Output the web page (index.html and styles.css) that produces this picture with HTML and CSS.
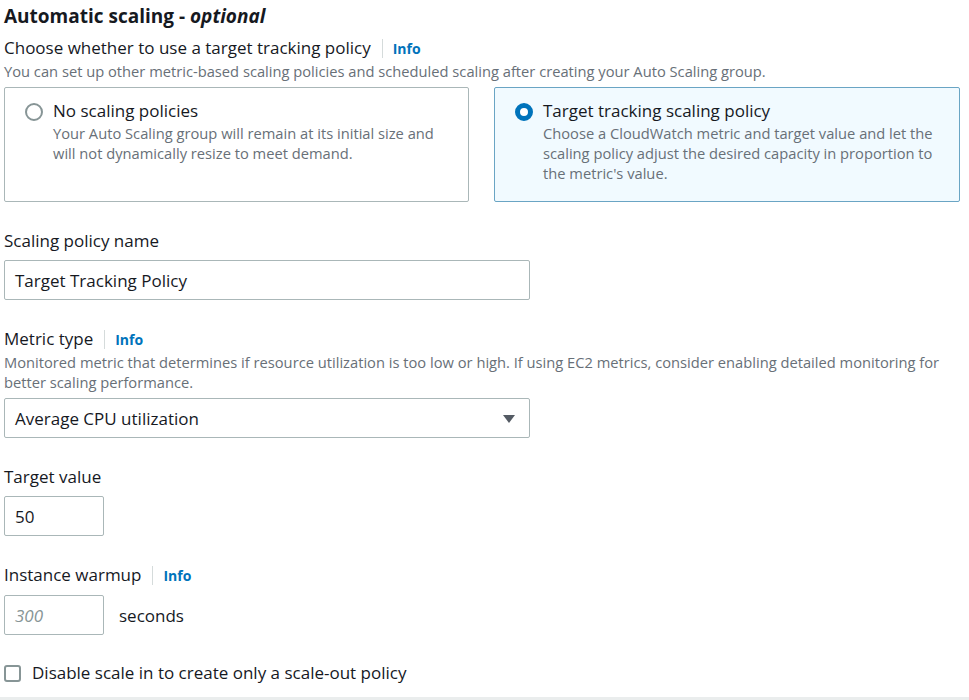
FILE: index.html
```html
<!DOCTYPE html>
<html>
<head>
<meta charset="utf-8">
<link rel="stylesheet" href="styles.css">
</head>
<body>
<div class="page">
  <h2 class="title">Automatic scaling - <i>optional</i></h2>

  <div class="field first">
    <div class="label-row"><span class="label">Choose whether to use a target tracking policy</span><span class="sep"></span><a class="info">Info</a></div>
    <div class="desc">You can set up other metric-based scaling policies and scheduled scaling after creating your Auto Scaling group.</div>
    <div class="tiles">
      <div class="tile">
        <span class="radio"></span>
        <div class="tile-text">
          <div class="tile-title">No scaling policies</div>
          <div class="tile-desc">Your Auto Scaling group will remain at its initial size and will not dynamically resize to meet demand.</div>
        </div>
      </div>
      <div class="tile selected">
        <span class="radio checked"></span>
        <div class="tile-text">
          <div class="tile-title">Target tracking scaling policy</div>
          <div class="tile-desc">Choose a CloudWatch metric and target value and let the scaling policy adjust the desired capacity in proportion to the metric's value.</div>
        </div>
      </div>
    </div>
  </div>

  <div class="field">
    <div class="label-row"><span class="label">Scaling policy name</span></div>
    <div class="input wide">Target Tracking Policy</div>
  </div>

  <div class="field">
    <div class="label-row"><span class="label">Metric type</span><span class="sep"></span><a class="info">Info</a></div>
    <div class="desc">Monitored metric that determines if resource utilization is too low or high. If using EC2 metrics, consider enabling detailed monitoring for better scaling performance.</div>
    <div class="input wide select after-desc">Average CPU utilization
      <svg class="caret" width="14" height="10" viewBox="0 0 14 10"><path d="M1 1h12L7 9z" fill="#545b64"/></svg>
    </div>
  </div>

  <div class="field">
    <div class="label-row"><span class="label">Target value</span></div>
    <div class="input small">50</div>
  </div>

  <div class="field">
    <div class="label-row"><span class="label">Instance warmup</span><span class="sep"></span><a class="info">Info</a></div>
    <div class="inline">
      <div class="input small placeholder">300</div>
      <span class="unit">seconds</span>
    </div>
  </div>

  <div class="check-row">
    <span class="checkbox"></span>
    <span class="check-label">Disable scale in to create only a scale-out policy</span>
  </div>
</div>
<div class="bottom-bar"></div>
</body>
</html>
```

FILE: styles.css
```css
* { box-sizing: border-box; }
html, body { margin: 0; padding: 0; background: #fff; }
body {
  font-family: "Open Sans", "Noto Sans", sans-serif;
  color: #16191f;
  height: 700px;
  overflow: hidden;
  position: relative;
}
.page { padding: 3px 10px 0 4px; }
.title {
  margin: 0;
  font-size: 19px;
  font-weight: 700;
  line-height: 26px;
}
.title i { font-weight: 700; }
.field { margin-top: 26px; }
.field.first { margin-top: 6px; }
.label-row {
  display: flex;
  align-items: center;
  height: 26px;
}
.label { font-size: 17px; line-height: 26px; }
.sep {
  width: 1px;
  height: 19px;
  background: #d5dbdb;
  margin: 0 10px 0 11px;
}
.info {
  color: #0073bb;
  font-weight: 700;
  font-size: 14px;
}
.desc {
  font-size: 14.7px;
  line-height: 20px;
  color: #687078;
}
.tiles {
  display: grid;
  grid-template-columns: 465px 466px;
  column-gap: 25px;
  margin-top: 6px;
}
.tile {
  border: 1px solid #aab7b8;
  border-radius: 2px;
  height: 115px;
  display: flex;
  padding: 11px 20px 0 20px;
  gap: 10px;
}
.tile.selected {
  background: #f1faff;
  border-color: #6aa5c4;
}
.radio {
  width: 18px;
  height: 18px;
  border-radius: 50%;
  border: 2px solid #879596;
  margin-top: 4px;
  flex: none;
  background: #fff;
}
.radio.checked {
  border: 5px solid #0073bb;
}
.tile-title { font-size: 17px; line-height: 24px; }
.tile-desc {
  font-size: 14.7px;
  line-height: 20px;
  color: #687078;
}
.input {
  border: 1px solid #aab7b8;
  border-radius: 2px;
  height: 40px;
  display: flex;
  align-items: center;
  padding: 0 10px;
  font-size: 17px;
  margin-top: 6px;
  background: #fff;
}
.input.after-desc { margin-top: 6px; }
.input.wide { width: 526px; }
.input.small { width: 100px; }
.select { justify-content: space-between; padding-right: 13px; }
.caret { margin-top: 1px; }
.placeholder { color: #879596; font-style: italic; }
.inline { display: flex; align-items: center; gap: 15px; margin-top: 7px; }
.inline .input { margin-top: 0; }
.unit { font-size: 17px; }
.check-row {
  display: flex;
  align-items: center;
  gap: 11px;
  margin-top: 26px;
}
.checkbox {
  width: 17px;
  height: 17px;
  border: 2px solid #879596;
  border-radius: 3px;
  flex: none;
}
.check-label { font-size: 17px; line-height: 24px; }
.bottom-bar {
  position: absolute;
  left: 0; right: 0; bottom: 0;
  height: 3px;
  background: #eaeded;
}
```
